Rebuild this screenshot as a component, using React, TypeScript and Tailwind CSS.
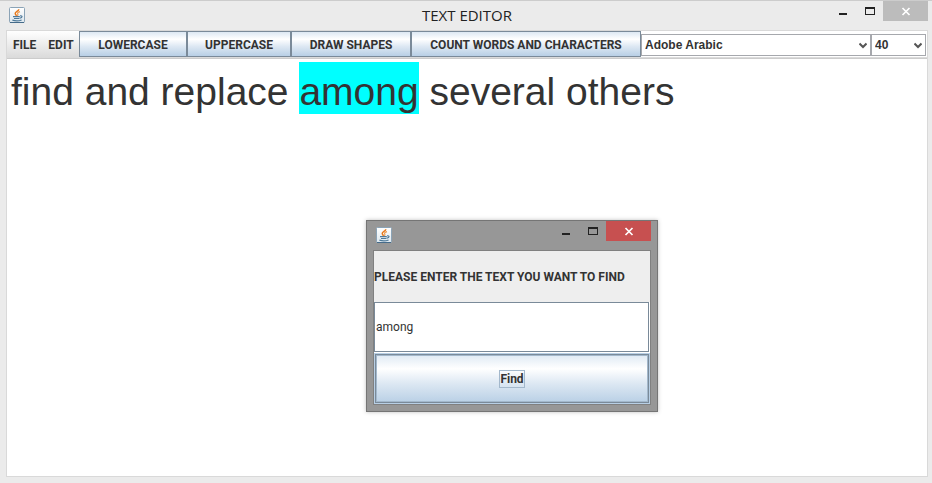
import React, { useState } from "react";

const FONTS = ["Adobe Arabic", "Arial", "Courier New", "Times New Roman"];
const SIZES = ["12", "20", "30", "40", "50"];

const UI = "font-['Roboto','Liberation_Sans',sans-serif] text-xs leading-4 text-[#333333]";

function JavaIcon() {
  return (
    <svg className="block size-4 shrink-0" viewBox="0 0 16 16" aria-hidden="true">
      <defs>
        <linearGradient id="cupTile" x1="0" y1="0" x2="0" y2="1">
          <stop offset="0" stopColor="#ffffff" />
          <stop offset="1" stopColor="#dde7ee" />
        </linearGradient>
      </defs>
      <rect x="0.5" y="0.5" width="15" height="15" rx="1" fill="url(#cupTile)" stroke="#8ba3b6" />
      <path d="M1 15.5H15" stroke="#456b8a" />
      <path d="M9.8 2.2C9.8 4.2 6 4.6 6.2 6.6C6.4 7.5 7.2 8 7.6 8.8" fill="none" stroke="#e8791c" strokeWidth="1.5" />
      <path d="M11 4.6C8.8 5.2 8.2 6 8.8 7C9.2 7.6 8.9 8.2 8.3 8.8" fill="none" stroke="#ee9a4e" strokeWidth="1.2" />
      <path d="M4 9.6H10.8M5 11.5H10.4M11 8.8C13.8 8.4 13.6 10.8 10.8 11.2" fill="none" stroke="#4f7a9a" strokeWidth="1.2" />
      <path d="M3.4 13.1C6 14 10 14 12.6 13" fill="none" stroke="#4f7a9a" strokeWidth="1.2" />
    </svg>
  );
}

function WindowButtons({ closeClass }: { closeClass: string }) {
  return (
    <div className="flex h-5 shrink-0">
      <button type="button" aria-label="Minimize" className="w-[27px]">
        <svg className="block" width="27" height="20" viewBox="0 0 27 20" aria-hidden="true">
          <path d="M9 12h8v2H9z" fill="#222222" />
        </svg>
      </button>
      <button type="button" aria-label="Maximize" className="w-[26px]">
        <svg className="block" width="26" height="20" viewBox="0 0 26 20" aria-hidden="true">
          <path d="M8 6h10v8H8zM9 8v5h8V8z" fill="#222222" fillRule="evenodd" />
        </svg>
      </button>
      <button type="button" aria-label="Close" className={`w-[45px] ${closeClass}`}>
        <svg className="block" width="45" height="20" viewBox="0 0 45 20" aria-hidden="true">
          <path d="M19.5 7L26.5 14M26.5 7L19.5 14" stroke="#ffffff" strokeWidth="1.7" />
        </svg>
      </button>
    </div>
  );
}

const METAL = "bg-[linear-gradient(to_bottom,#dde8f3_0%,#ffffff_30%,#dde8f3_60%,#b8cfe5_100%)]";

function ToolButton({ width, children }: { width: string; children: React.ReactNode }) {
  return (
    <button
      type="button"
      className={`${width} ${METAL} h-[26px] shrink-0 whitespace-nowrap border border-[#7a8a99] pt-0.5 font-bold`}
    >
      {children}
    </button>
  );
}

function Combo({ label, options, initial, className }: { label: string; options: string[]; initial: string; className: string }) {
  const [value, setValue] = useState(initial);
  return (
    <div className={`relative h-[22px] ${className}`}>
      <select
        aria-label={label}
        value={value}
        onChange={(e) => setValue(e.target.value)}
        className="block h-full w-full appearance-none border border-[#a6a8ad] bg-white pl-[3px] pr-4 font-['Liberation_Sans',sans-serif] text-xs font-bold"
      >
        {options.map((o) => (
          <option key={o}>{o}</option>
        ))}
      </select>
      <svg className="pointer-events-none absolute right-1 top-2 h-2 w-2" viewBox="0 0 8 8" aria-hidden="true">
        <path d="M0.5 1.5L4 5L7.5 1.5" fill="none" stroke="#555555" strokeWidth="2" />
      </svg>
    </div>
  );
}

function FindDialog() {
  const [query, setQuery] = useState("among");
  return (
    <section
      aria-label="Find"
      className="absolute left-[366px] top-[219px] w-[292px] border border-[#757575] bg-[#979797] px-1.5 pb-1.5 shadow-[0_0_4px_rgba(0,0,0,0.25)]"
    >
      <header className="flex h-[29px] items-start justify-between pl-[3px]">
        <div className="pt-1.5">
          <JavaIcon />
        </div>
        <WindowButtons closeClass="bg-[#c75050]" />
      </header>
      <form className="border border-[#808080] bg-[#eeeeee]" onSubmit={(e) => e.preventDefault()}>
        <label htmlFor="query" className="flex h-[51px] items-center whitespace-nowrap font-bold">
          PLEASE ENTER THE TEXT YOU WANT TO FIND
        </label>
        <div className="bg-white pb-px pr-px">
          <input
            id="query"
            type="text"
            value={query}
            onChange={(e) => setQuery(e.target.value)}
            className="block h-[50px] w-full border border-[#7a8a99] bg-white px-px outline-none"
          />
        </div>
        <button type="submit" className={`${METAL} block h-[51px] w-full border border-[#b8cfe5] font-bold`}>
          <span className="block h-full border border-[#7a8a99]">
            <span className="flex h-full items-center justify-center border border-[#a3b8cc]">
              <span className="border border-[#a3b8cc]">Find</span>
            </span>
          </span>
        </button>
      </form>
    </section>
  );
}

export default function App() {
  return (
    <main className={`${UI} relative flex min-h-screen flex-col border-t border-[#cccccc] bg-[#ebebeb] pb-1.5 pl-1.5 pr-1`}>
      <header className="grid h-[29px] grid-cols-[1fr_auto_1fr] items-start">
        <div className="pl-[3px] pt-1.5">
          <JavaIcon />
        </div>
        <h1 className="pt-1 font-['Open_Sans','Noto_Sans',sans-serif] text-[15px] leading-5 text-[#222222]">TEXT EDITOR</h1>
        <div className="flex justify-end">
          <WindowButtons closeClass="bg-[#bcbcbc]" />
        </div>
      </header>
      <div className="flex flex-1 flex-col border border-[#d9d9d9] bg-white">
        <nav className="flex h-7 border-b border-[#cccccc] bg-linear-to-b from-white to-[#dadada]">
          <div className="flex w-[72px] shrink-0 items-center gap-3 pl-1.5 pt-px font-bold">
            <button type="button">FILE</button>
            <button type="button">EDIT</button>
          </div>
          <ToolButton width="w-[108px]">LOWERCASE</ToolButton>
          <ToolButton width="w-[104px]">UPPERCASE</ToolButton>
          <ToolButton width="w-[120px]">DRAW SHAPES</ToolButton>
          <ToolButton width="w-[230px]">COUNT WORDS AND CHARACTERS</ToolButton>
          <div className="flex h-[26px] flex-1 items-end bg-white pb-px pr-px">
            <Combo label="Font" options={FONTS} initial="Adobe Arabic" className="flex-1" />
            <Combo label="Size" options={SIZES} initial="40" className="w-[55px]" />
          </div>
        </nav>
        <article className="flex-1 whitespace-nowrap px-1 pt-[3px] font-['Liberation_Sans',Arial,sans-serif] text-[39px] leading-[52px]">
          <p className="pt-1">
            find and replace{" "}
            <mark className="-mt-1 inline-block bg-[#00ffff] pt-2 leading-[44px] text-[#333333]">among</mark> several others
          </p>
        </article>
      </div>
      <FindDialog />
    </main>
  );
}
